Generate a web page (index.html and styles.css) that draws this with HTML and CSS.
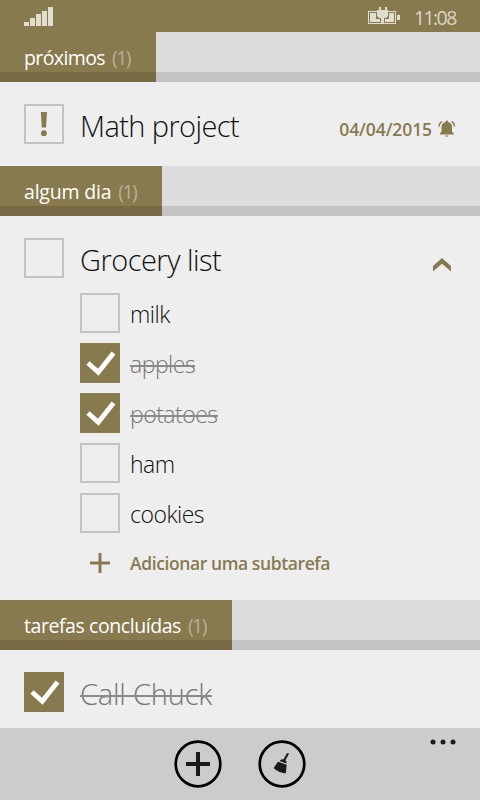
FILE: index.html
```html
<!DOCTYPE html>
<html lang="pt">
<head>
<meta charset="utf-8">
<title>Tarefas</title>
<link rel="stylesheet" href="styles.css">
</head>
<body>
<div class="phone">
  <header class="status">
    <svg class="signal" width="30" height="20" viewBox="0 0 30 20"><path d="M0 15h5v4H0zM6 11h5v8H6zM12 7h5v12h-5zM18 4h5v15h-5zM24 0h5v19h-5z"/></svg>
    <svg class="battery" width="32" height="18" viewBox="0 0 32 18"><path d="M0 4h9v1H1v11h12v1H0zM20 4h8v13H16v-1h11V5h-7zM29 8h3v5h-3zM2 6h6v6h4v3H2zM21 6h5v9h-9v-3h4zM11 0h2v3h4V0h2v3h1v6l-2 2h-2v6h-3v-6h-2L9 9V3h2z"/></svg>
    <span class="clock">11:08</span>
  </header>
  <div class="head"><h2 class="tab tab-next"><span class="t-next">próximos</span><span class="count">(1)</span></h2></div>
  <section class="row row-math">
    <div class="box"><svg width="36" height="36" viewBox="0 0 36 36"><path class="gold" d="M14.800 6h6.200l-1 15.500h-4.200z"/><circle class="gold" cx="17.900" cy="27.200" r="2.900"/></svg></div>
    <span class="title t-math">Math project</span>
    <span class="date">04/04/2015</span>
    <svg class="bell" width="18" height="18" viewBox="0 0 18 18"><path class="gold" d="M7.500 2Q7.600.6 8.800.6T10.100 2Q14 3 14 7v4.500l1.800 2.300v.8h-14v-.8L3.500 11.500V7q0-4 4-5zM7.200 15.400h3.200q-.4 1.300-1.600 1.300t-1.600-1.300z"/><path class="ring" d="M3.700 1.400Q1 3.600.9 6.500M13.800 1.400q2.700 2.200 2.800 5.100"/></svg>
  </section>
  <div class="head"><h2 class="tab tab-some"><span class="t-some">algum dia</span><span class="count">(1)</span></h2></div>
  <section class="group">
    <div class="row row-grocery">
      <div class="box"></div>
      <span class="title t-grocery">Grocery list</span>
      <svg class="chevron" width="18" height="14" viewBox="0 0 18 14"><path class="gold" d="M0 8 9 0l9 8v5.500L9 5.800 0 13.500z"/></svg>
    </div>
    <ul class="subs">
      <li><div class="box"></div><span>milk</span></li>
      <li><div class="box on"><svg width="40" height="40" viewBox="0 0 40 40"><path class="tick" d="m8 20 10.300 9.300L33.500 10"/></svg></div><span class="done">apples</span></li>
      <li><div class="box on"><svg width="40" height="40" viewBox="0 0 40 40"><path class="tick" d="m8 20 10.300 9.300L33.500 10"/></svg></div><span class="done">potatoes</span></li>
      <li><div class="box"></div><span>ham</span></li>
      <li><div class="box"></div><span>cookies</span></li>
    </ul>
    <div class="add"><svg width="20" height="20" viewBox="0 0 20 20"><path class="gold" d="M8.500 0h3v8.500H20v3h-8.500V20h-3v-8.500H0v-3h8.500z"/></svg><span>Adicionar uma subtarefa</span></div>
  </section>
  <div class="head"><h2 class="tab tab-done"><span class="t-done">tarefas concluídas</span><span class="count">(1)</span></h2></div>
  <section class="row row-call">
    <div class="box on"><svg width="40" height="40" viewBox="0 0 40 40"><path class="tick" d="m8 20 10.300 9.300L33.500 10"/></svg></div>
    <span class="title done t-call">Call Chuck</span>
  </section>
  <footer class="bar">
    <svg width="48" height="48" viewBox="0 0 48 48"><circle class="circle" cx="24" cy="24" r="22.300"/><path class="ink" d="M22 12h4v10h10v4H26v10h-4V26H12v-4h10z"/></svg>
    <svg width="48" height="48" viewBox="0 0 48 48"><circle class="circle" cx="24" cy="24" r="22.300"/><path class="ink" d="M28.800 13.500q.6-.9 1.500-.4.700.5.300 1.300L27.400 20.300q1.700 1.200 1 3.200l-6.700-2.600q1.200-2 3.700-1.400zM20 21.700l8.700 3-.9 8.500-3.300-.3-1.400-.9-.5.400-2.200-1-.8-.8-.7.100-3.300-2.800z"/></svg>
    <svg class="more" width="26" height="6" viewBox="0 0 26 6"><circle class="ink" cx="3" cy="3" r="2.500"/><circle class="ink" cx="13" cy="3" r="2.500"/><circle class="ink" cx="23" cy="3" r="2.500"/></svg>
  </footer>
</div>
</body>
</html>
```

FILE: styles.css
```css
* { box-sizing: border-box; margin: 0; padding: 0; }
body { background: #eee; font-family: "Open Sans", "Noto Sans", sans-serif; }
svg { display: block; flex: none; }
.phone { width: 480px; height: 800px; display: flex; flex-direction: column; overflow: hidden; background: #eee; color: #111; white-space: nowrap; }
.status { height: 32px; flex: none; display: flex; align-items: flex-start; padding: 7px 24px 0; background: #877a4e; fill: #e2decf; }
.battery { margin-left: 314px; }
.clock { margin: -2px 0 0 14px; font-size: 19.500px; line-height: 25px; font-weight: 400; letter-spacing: -1.600px; color: #dcd7c6; }
.head { height: 50px; flex: none; background: linear-gradient(#ddd 40px, #c4c4c4 40px); }
.tab { height: 50px; padding: 11px 0 0 24px; display: flex; gap: 7px; background: linear-gradient(#877a4e 40px, #766943 40px); color: #fff; font-size: 19.500px; line-height: 29px; font-weight: 400; }
.tab-next { width: 156px; }
.tab-some { width: 162px; }
.tab-done { width: 232px; }
.t-next { letter-spacing: -.600px; }
.t-some { letter-spacing: -.200px; }
.t-done { letter-spacing: -.430px; }
.count { color: #b8b094; letter-spacing: -1.600px; }
.row { display: flex; align-items: flex-start; padding: 22px 24px 0; }
.row-math { height: 84px; flex: none; }
.row-grocery { height: 77px; }
.row-call { height: 78px; flex: none; }
.box { width: 40px; height: 40px; flex: none; border: 2px solid #c3c3c3; }
.on { border: 0; background: #877a4e; }
.gold { fill: #877a4e; }
.ring { fill: none; stroke: #877a4e; stroke-width: 1.500; }
.tick { fill: none; stroke: #fff; stroke-width: 4.800; }
.title { margin-left: 16px; font-size: 29px; line-height: 43px; font-weight: 300; }
.t-math { letter-spacing: -.600px; }
.t-grocery { letter-spacing: -.520px; }
.t-call { letter-spacing: -.200px; }
.date { margin: 13px 0 0 auto; font-size: 17.500px; line-height: 24px; font-weight: 600; letter-spacing: -.100px; color: #877a4e; }
.bell { margin: 16px 0 0 6px; }
.chevron { margin: 20px 5px 0 auto; }
.group { height: 384px; flex: none; }
.subs { list-style: none; display: flex; flex-direction: column; gap: 10px; padding-left: 80px; }
.subs li { display: flex; gap: 10px; font-size: 23px; font-weight: 300; line-height: 43px; height: 40px; letter-spacing: -.500px; }
.done { position: relative; color: #777; }
.done::after { content: ""; position: absolute; left: 0; right: 0; top: 23px; height: 2px; background: #8a8a8a; }
.subs .done::after { top: 22px; height: 2px; background: #8a8a8a; }
.add { display: flex; align-items: center; gap: 20px; height: 42px; margin-top: 9px; padding-left: 90px; color: #877a4e; font-size: 17.500px; font-weight: 600; letter-spacing: -.400px; }
.bar { position: relative; height: 72px; flex: none; display: flex; justify-content: center; gap: 36px; padding-top: 12px; background: #ccc; }
.circle { fill: none; stroke: #000; stroke-width: 2.700; }
.ink { fill: #1a1a1a; }
.more { position: absolute; right: 24px; top: 11px; }
```
